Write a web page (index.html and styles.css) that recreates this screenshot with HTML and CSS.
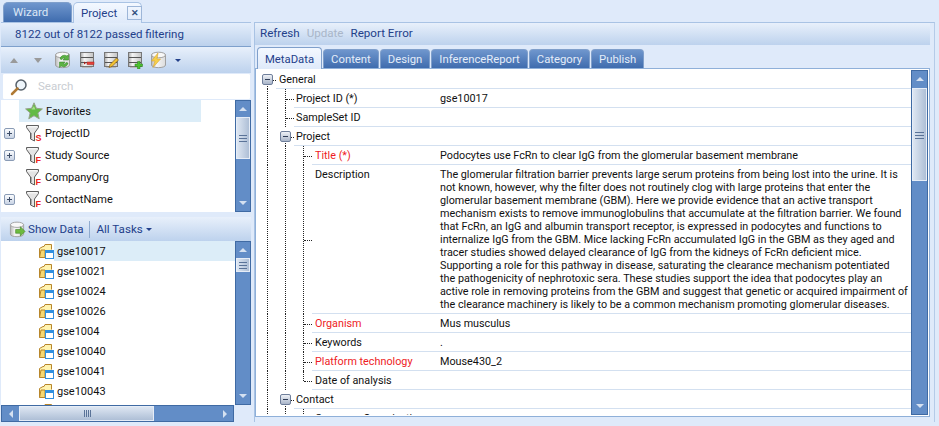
FILE: index.html

```html
<!DOCTYPE html>
<html>
<head>
<meta name="viewport" content="width=device-width, initial-scale=1">
<title>Project</title>
<link rel="stylesheet" href="styles.css">
</head>
<body>

<svg class="defs" width="0" height="0">
  <defs>
    <linearGradient id="disk" x1="0" x2="1" y1="0" y2="0"><stop offset="0" stop-color="#a8a8a8"/><stop offset=".3" stop-color="#f4f4f4"/><stop offset="1" stop-color="#c4c4c4"/></linearGradient>
    <linearGradient id="canfill" x1="0" x2="1" y1="0" y2="0"><stop offset="0" stop-color="#b9b9b9"/><stop offset=".35" stop-color="#f6f6f6"/><stop offset="1" stop-color="#dcdcdc"/></linearGradient>
    <symbol id="stack" viewBox="0 0 18 18">
      <rect x="2.500" y="1.500" width="13" height="14" fill="url(#disk)" stroke="#777"/>
      <path d="M3 6.500h12M3 11.500h12" stroke="#555"/>
      <path d="M4 16.500h10" stroke="#bbb"/>
    </symbol>
    <symbol id="can" viewBox="0 0 18 18">
      <path d="M1.500 4v10c0 3.500 14 3.500 14 0V4z" fill="url(#canfill)" stroke="#a0a0a0"/>
      <ellipse cx="8.500" cy="4" rx="7" ry="2.800" fill="#f8f8f8" stroke="#a0a0a0"/>
    </symbol>
    <symbol id="funnel" viewBox="0 0 16 18">
      <path d="M.5 1.500h12v2L8.500 9v8l-4-2V9L.5 3.500z" fill="#e4e4e4" stroke="#5f5f5f"/>
      <path d="M2 2.800h9" stroke="#fff"/>
      <path d="M5.500 9v5.500" stroke="#a8a8a8"/>
    </symbol>
    <symbol id="folder" viewBox="0 0 16 16">
      <path d="M1.500 14.500V5.500L5 3.500h1l1-2h6.500v5" fill="#fff3b0" stroke="#b8862b"/>
      <path d="M1.500 14.500L3 7h4v7.500z" fill="#f5d772" stroke="#b8862b"/>
      <rect x="7.500" y="7.500" width="8" height="8" fill="#fff" stroke="#2f8fe0"/>
      <rect x="8" y="8" width="7" height="2" fill="#2f8fe0"/>
    </symbol>
  </defs>
</svg>

<div class="tabstrip">
  <div class="doc-tab">Wizard</div>
  <div class="doc-tab active">Project <span class="close">&#10005;</span></div>
</div>

<div class="main">
  <div class="left">
    <div class="status">8122 out of 8122 passed filtering</div>

    <div class="toolbar">
      <span class="tri up"></span>
      <span class="tri down"></span>
      <svg class="tool first" viewBox="0 0 18 18"><use href="#can"/><path d="M6 8a4.500 4.500 0 0 1 7-3l1.500-1.500V9H9l2-2a2.500 2.500 0 0 0-3 1.500zM14 12a4.500 4.500 0 0 1-7 3l-1.500 1.500V11H11l-2 2a2.500 2.500 0 0 0 3-1.500z" fill="#5cb343" stroke="#2f7f25" stroke-width=".5"/></svg>
      <svg class="tool" viewBox="0 0 18 18"><use href="#stack"/><path d="M6 10.500l2 1.500-2 1.500z" fill="#a52019"/><rect x="9" y="11" width="7" height="2.500" fill="#e6413a" stroke="#a52019" stroke-width=".5"/></svg>
      <svg class="tool" viewBox="0 0 18 18"><use href="#stack"/><path d="M7 16.500l1-3 6.500-6.500 2 2-6.500 6.500z" fill="#f2c230" stroke="#6e4a14" stroke-width=".6"/></svg>
      <svg class="tool" viewBox="0 0 18 18"><use href="#stack"/><path d="M11.500 10.500h2.500V13h2.500v2.500H14V18h-2.500v-2.500H9V13h2.500z" fill="#4cc12f" stroke="#2a7d1c" stroke-width=".5"/></svg>
      <svg class="tool" viewBox="0 0 18 18"><use href="#can"/><path d="M8 2L1.500 10h3.500l-2 6.500L10.500 8H7z" fill="#f5cf4a" stroke="#d9a531" stroke-width=".6"/></svg>
      <span class="caret"></span>
    </div>

    <div class="search">
      <svg class="lens" viewBox="0 0 18 18"><circle cx="11" cy="7" r="5" fill="#eef5fb" stroke="#56606a" stroke-width="1.500"/><path d="M7.500 10.500L2 16" stroke="#b07a35" stroke-width="2.500" stroke-linecap="round"/></svg>
      <span class="hint">Search</span>
    </div>

    <div class="pane tree-pane">
      <div class="pane-list">
        <div class="f-row">
          <span class="plus-cell"></span>
          <div class="f-item selected">
            <svg class="ic star" viewBox="0 0 18 18"><path d="M9 .8l2.400 5.500 6 .6-4.500 4 1.300 5.900L9 13.700l-5.200 3.100 1.300-5.900-4.500-4 6-.6z" fill="#63bb45" stroke="#98a38c"/><path d="M9 4l1.300 3.500H6.500z" fill="#a6e08a"/></svg>
            <span>Favorites</span>
          </div>
        </div>
        <div class="f-row">
          <span class="plus-cell"><span class="box plus"></span></span>
          <div class="f-item">
            <svg class="fn" viewBox="0 0 16 18"><use href="#funnel"/><text x="9.500" y="17" class="fl">S</text></svg>
            <span>ProjectID</span>
          </div>
        </div>
        <div class="f-row">
          <span class="plus-cell"><span class="box plus"></span></span>
          <div class="f-item">
            <svg class="fn" viewBox="0 0 16 18"><use href="#funnel"/><text x="9.500" y="17" class="fl">F</text></svg>
            <span>Study Source</span>
          </div>
        </div>
        <div class="f-row">
          <span class="plus-cell"></span>
          <div class="f-item">
            <svg class="fn" viewBox="0 0 16 18"><use href="#funnel"/><text x="9.500" y="17" class="fl">F</text></svg>
            <span>CompanyOrg</span>
          </div>
        </div>
        <div class="f-row">
          <span class="plus-cell"><span class="box plus"></span></span>
          <div class="f-item">
            <svg class="fn" viewBox="0 0 16 18"><use href="#funnel"/><text x="9.500" y="17" class="fl">F</text></svg>
            <span>ContactName</span>
          </div>
        </div>
      </div>
      <div class="vscroll">
        <div class="sb-btn"><span class="arrow a-up"></span></div>
        <div class="sb-thumb tall"></div>
        <div class="sb-fill"></div>
        <div class="sb-btn"><span class="arrow a-down"></span></div>
      </div>
    </div>

    <div class="toolbar tasks">
      <svg class="show-ic" viewBox="0 0 18 18"><use href="#can"/><path d="M7 9h5V6l5 5-5 5v-3H7z" fill="#6dbb3e" stroke="#3c7f1f" stroke-width=".6"/></svg>
      <span class="task-btn">Show Data</span>
      <span class="sep"></span>
      <span class="task-btn">All Tasks</span>
      <span class="caret small"></span>
    </div>

    <div class="pane data-pane">
      <div class="pane-list">
        <div class="d-row"><svg class="ic" viewBox="0 0 16 16"><use href="#folder"/></svg><span class="d-name selected">gse10017</span></div>
        <div class="d-row"><svg class="ic" viewBox="0 0 16 16"><use href="#folder"/></svg><span class="d-name">gse10021</span></div>
        <div class="d-row"><svg class="ic" viewBox="0 0 16 16"><use href="#folder"/></svg><span class="d-name">gse10024</span></div>
        <div class="d-row"><svg class="ic" viewBox="0 0 16 16"><use href="#folder"/></svg><span class="d-name">gse10026</span></div>
        <div class="d-row"><svg class="ic" viewBox="0 0 16 16"><use href="#folder"/></svg><span class="d-name">gse1004</span></div>
        <div class="d-row"><svg class="ic" viewBox="0 0 16 16"><use href="#folder"/></svg><span class="d-name">gse10040</span></div>
        <div class="d-row"><svg class="ic" viewBox="0 0 16 16"><use href="#folder"/></svg><span class="d-name">gse10041</span></div>
        <div class="d-row"><svg class="ic" viewBox="0 0 16 16"><use href="#folder"/></svg><span class="d-name">gse10043</span></div>
        <div class="d-row"><svg class="ic" viewBox="0 0 16 16"><use href="#folder"/></svg></div>
      </div>
      <div class="vscroll">
        <div class="sb-btn"><span class="arrow a-up"></span></div>
        <div class="sb-thumb short"></div>
        <div class="sb-fill"></div>
        <div class="sb-btn"><span class="arrow a-down"></span></div>
      </div>
    </div>

    <div class="hscroll">
      <div class="sb-btn side"><span class="arrow a-left"></span></div>
      <div class="h-thumb"></div>
      <div class="sb-fill"></div>
      <div class="sb-btn side"><span class="arrow a-right"></span></div>
    </div>
  </div>

  <div class="right">
    <div class="actions">
      <span>Refresh</span>
      <span class="off">Update</span>
      <span>Report Error</span>
    </div>

    <div class="tabs">
      <div class="tab on">MetaData</div>
      <div class="tab">Content</div>
      <div class="tab">Design</div>
      <div class="tab">InferenceReport</div>
      <div class="tab">Category</div>
      <div class="tab">Publish</div>
    </div>

    <div class="sheet">
      <div class="grid">
        <div class="row">
          <span class="g x"><i></i></span>
          <div class="cell"><span class="key">General</span></div>
        </div>
        <div class="row">
          <span class="g v"></span><span class="g t"></span>
          <div class="cell"><span class="key k1">Project ID (*)</span><span class="val">gse10017</span></div>
        </div>
        <div class="row">
          <span class="g v"></span><span class="g t"></span>
          <div class="cell"><span class="key k1">SampleSet ID</span></div>
        </div>
        <div class="row">
          <span class="g v"></span><span class="g x mid"><i></i></span>
          <div class="cell"><span class="key k1">Project</span></div>
        </div>
        <div class="row">
          <span class="g v"></span><span class="g v"></span><span class="g t"></span>
          <div class="cell"><span class="key k2 req">Title (*)</span><span class="val">Podocytes use FcRn to clear IgG from the glomerular basement membrane</span></div>
        </div>
        <div class="row tall-row">
          <span class="g v"></span><span class="g v"></span><span class="g t"></span>
          <div class="cell"><span class="key k2">Description</span><span class="val">The glomerular filtration barrier prevents large serum proteins from being lost into the urine. It is<br>not known, however, why the filter does not routinely clog with large proteins that enter the<br>glomerular basement membrane (GBM). Here we provide evidence that an active transport<br>mechanism exists to remove immunoglobulins that accumulate at the filtration barrier. We found<br>that FcRn, an IgG and albumin transport receptor, is expressed in podocytes and functions to<br>internalize IgG from the GBM. Mice lacking FcRn accumulated IgG in the GBM as they aged and<br>tracer studies showed delayed clearance of IgG from the kidneys of FcRn deficient mice.<br>Supporting a role for this pathway in disease, saturating the clearance mechanism potentiated<br>the pathogenicity of nephrotoxic sera. These studies support the idea that podocytes play an<br>active role in removing proteins from the GBM and suggest that genetic or acquired impairment of<br>the clearance machinery is likely to be a common mechanism promoting glomerular diseases.</span></div>
        </div>
        <div class="row">
          <span class="g v"></span><span class="g v"></span><span class="g t"></span>
          <div class="cell"><span class="key k2 req">Organism</span><span class="val">Mus musculus</span></div>
        </div>
        <div class="row">
          <span class="g v"></span><span class="g v"></span><span class="g t"></span>
          <div class="cell"><span class="key k2">Keywords</span><span class="val">.</span></div>
        </div>
        <div class="row">
          <span class="g v"></span><span class="g v"></span><span class="g t"></span>
          <div class="cell"><span class="key k2 req">Platform technology</span><span class="val">Mouse430_2</span></div>
        </div>
        <div class="row">
          <span class="g v"></span><span class="g v"></span><span class="g l"></span>
          <div class="cell"><span class="key k2">Date of analysis</span></div>
        </div>
        <div class="row">
          <span class="g v"></span><span class="g x mid"><i></i></span>
          <div class="cell"><span class="key k1">Contact</span></div>
        </div>
        <div class="row">
          <span class="g v"></span><span class="g v"></span><span class="g t"></span>
          <div class="cell"><span class="key k2">Company Organization</span></div>
        </div>
      </div>
      <div class="vscroll big">
        <div class="sb-btn"><span class="arrow a-up"></span></div>
        <div class="sb-thumb huge"></div>
        <div class="sb-fill"></div>
        <div class="sb-btn"><span class="arrow a-down"></span></div>
      </div>
    </div>
  </div>
</div>

</body>
</html>
```

FILE: styles.css

```css
* {
    box-sizing: border-box;
}

html, body {
    height: 100%;
}

body {
    margin: 0;
    overflow: hidden;
    background-color: #dfeafa;
    font-family: Roboto, Arial, sans-serif;
    font-size: 11px;
    line-height: 13px;
    color: #111;
}

.defs {
    position: absolute;
}

/* document tabs */
.tabstrip {
    display: flex;
    gap: 1px;
    height: 22px;
    padding: 2px 0 0 3px;
}

.doc-tab {
    display: flex;
    align-items: center;
    flex: none;
    width: 69px;
    height: 20px;
    padding: 0 0 0 9px;
    border: 1px solid #7f9fcb;
    border-bottom: none;
    border-radius: 5px 5px 0 0;
    background: linear-gradient(#6f96cd, #3f6cae);
    color: #dbe7f6;
    font-size: 11.500px;
}

.doc-tab.active {
    position: relative;
    z-index: 1;
    height: 21px;
    padding-left: 7px;
    border-color: #a9c3e4;
    background: linear-gradient(#f3f8ff, #dfeafa);
    color: #23408a;
}

.close {
    flex: none;
    width: 15px;
    height: 14px;
    margin-left: 10px;
    border: 1px solid #9db6d8;
    color: #32507f;
    font-size: 9px;
    font-weight: bold;
    line-height: 12px;
    text-align: center;
}

.main {
    display: flex;
    gap: 3px;
    height: 400px;
    padding-left: 1px;
}

/* left column */
.left {
    display: flex;
    flex-direction: column;
    flex: none;
    width: 250px;
    border-top: 1px solid #a9c3e4;
}

.status {
    height: 24px;
    padding: 5px 0 0 14px;
    border-bottom: 1px solid #7ea0cc;
    background: linear-gradient(#e4eefb, #bcd1ec);
    color: #23408a;
    font-size: 11.500px;
}

.toolbar {
    display: flex;
    align-items: center;
    height: 26px;
    background: linear-gradient(#e8f0fb, #bdd2ed);
}

.tri {
    width: 0;
    height: 0;
    margin-left: 9px;
    border-left: 4px solid transparent;
    border-right: 4px solid transparent;
}

.tri.up {
    border-bottom: 5px solid #9a9a9a;
}

.tri.down {
    margin-left: 16px;
    border-top: 5px solid #9a9a9a;
}

.tool {
    width: 18px;
    height: 18px;
    margin-left: 6px;
}

.tool.first {
    margin-left: 12px;
}

.caret {
    width: 0;
    height: 0;
    margin-left: 7px;
    border-left: 3px solid transparent;
    border-right: 3px solid transparent;
    border-top: 3px solid #23408a;
}

.search {
    display: flex;
    align-items: center;
    height: 27px;
    margin-left: 1px;
    border: 1px solid #dfeafa;
    border-radius: 2px;
    background: #fff;
}

.lens {
    width: 18px;
    height: 18px;
    margin-left: 7px;
}

.hint {
    margin-left: 10px;
    color: #c9cdd2;
    font-size: 11.500px;
}

.pane {
    display: flex;
    overflow: hidden;
    background: #fff;
}

.pane-list {
    flex: 1;
    min-width: 0;
    overflow: hidden;
}

.tree-pane {
    height: 112px;
}

.f-row {
    display: flex;
    height: 22px;
}

.plus-cell {
    display: flex;
    align-items: center;
    flex: none;
    width: 18px;
    padding-left: 3px;
}

.box {
    position: relative;
    display: block;
    flex: none;
    width: 11px;
    height: 11px;
    border: 1px solid #8a9bb5;
    border-radius: 2px;
    background: linear-gradient(#fbfcfe, #c8d3e4);
}

.box::before {
    content: "";
    position: absolute;
    top: 4px;
    left: 2px;
    width: 5px;
    height: 1px;
    background: #3d4d68;
}

.box.plus::after {
    content: "";
    position: absolute;
    top: 2px;
    left: 4px;
    width: 1px;
    height: 5px;
    background: #3d4d68;
}

.f-item {
    display: flex;
    align-items: center;
    gap: 3px;
    flex: none;
    width: 182px;
    padding-left: 7px;
}

.selected {
    background: #dcedf8;
}

.ic {
    flex: none;
    width: 16px;
    height: 16px;
}

.star {
    width: 18px;
    height: 18px;
    margin-left: -1px;
}

.fn {
    flex: none;
    width: 16px;
    height: 18px;
}

.fl {
    fill: #ee2222;
    font-family: "Liberation Sans", Arial, sans-serif;
    font-size: 9px;
    font-weight: bold;
}

.tasks {
    height: 24px;
    margin-top: 5px;
    padding-left: 8px;
    color: #23408a;
    font-size: 11.600px;
}

.show-ic {
    width: 17px;
    height: 17px;
}

.task-btn {
    margin-left: 2px;
}

.sep {
    width: 1px;
    height: 17px;
    margin: 0 4px 0 6px;
    background: #8fabcf;
}

.caret.small {
    margin-left: 3px;
}

.data-pane {
    height: 164px;
}

.d-row {
    display: flex;
    align-items: center;
    height: 20px;
    padding-left: 37px;
}

.d-name {
    flex: 1;
    height: 100%;
    padding: 4px 0 0 3px;
}

/* scrollbars */
.vscroll {
    display: flex;
    flex-direction: column;
    flex: none;
    width: 16px;
    border: 1px solid #3f6aa3;
    background: #628dc7;
}

.sb-btn {
    display: flex;
    align-items: center;
    justify-content: center;
    flex: none;
    height: 16px;
}

.sb-fill {
    flex: 1;
}

.sb-thumb, .h-thumb {
    position: relative;
    flex: none;
    background: linear-gradient(90deg, #dde6f2, #aebfd6);
    border: 1px solid #e6edf7;
}

.sb-thumb::after {
    content: "";
    position: absolute;
    top: 50%;
    left: 2px;
    right: 2px;
    height: 7px;
    margin-top: -3px;
    background: repeating-linear-gradient(#5a7398 0 1px, transparent 1px 3px);
}

.tall {
    height: 42px;
}

.short {
    height: 14px;
}

.huge {
    height: 93px;
    margin-top: 1px;
}

.arrow {
    width: 0;
    height: 0;
    border: 4px solid transparent;
}

.a-up {
    margin-bottom: 4px;
    border-bottom-color: #d5e1f1;
}

.a-down {
    margin-top: 4px;
    border-top-color: #d5e1f1;
}

.a-left {
    margin-right: 4px;
    border-right-color: #d5e1f1;
}

.a-right {
    margin-left: 4px;
    border-left-color: #d5e1f1;
}

.hscroll {
    display: flex;
    flex: none;
    width: 233px;
    height: 17px;
    border: 1px solid #3f6aa3;
    background: #628dc7;
}

.sb-btn.side {
    width: 17px;
    height: auto;
}

.h-thumb {
    width: 135px;
    background: linear-gradient(#dde6f2, #aebfd6);
}

.h-thumb::after {
    content: "";
    position: absolute;
    top: 3px;
    bottom: 3px;
    left: 64px;
    width: 7px;
    background: repeating-linear-gradient(90deg, #5a7398 0 1px, transparent 1px 2px);
}

/* right column */
.right {
    display: flex;
    flex-direction: column;
    flex: none;
    width: 681px;
    padding-right: 4px;
    border-left: 1px solid #a9c3e4;
    border-right: 1px solid #b5cbe8;
    border-top: 1px solid #a9c3e4;
}

.actions {
    display: flex;
    gap: 7px;
    flex: none;
    height: 22px;
    padding: 4px 0 0 5px;
    background: linear-gradient(#e8f0fb, #bdd2ed);
    color: #23408a;
    font-size: 11.600px;
}

.off {
    color: #a9b6c9;
}

.tabs {
    display: flex;
    gap: 1px;
    flex: none;
    height: 23px;
    padding: 2px 0 0 2px;
}

.tab {
    height: 19px;
    margin-top: 2px;
    padding: 3px 7px 0;
    border: 1px solid #7f9fcb;
    border-bottom: none;
    border-radius: 4px 4px 0 0;
    background: linear-gradient(#6f96cd, #3f6cae);
    color: #e4edf9;
    font-size: 11.300px;
}

.tab.on {
    position: relative;
    z-index: 1;
    height: 22px;
    margin-top: 0;
    padding-top: 5px;
    background: linear-gradient(#f3f8ff, #dfeafa);
    color: #23408a;
}

.sheet {
    display: flex;
    height: 349px;
    padding: 1px;
    border: 1px solid #8fb0d9;
    background: #fff;
}

.grid {
    flex: 1;
    min-width: 0;
    overflow: hidden;
    padding-left: 1px;
}

.vscroll.big {
    width: 17px;
}

.row {
    display: flex;
    min-height: 19px;
}

.g {
    position: relative;
    flex: none;
    width: 18px;
}

.g.v::before, .g.t::before, .g.l::before {
    content: "";
    position: absolute;
    top: 0;
    bottom: 0;
    left: 9px;
    border-left: 1px dotted #222;
}

.g.l::before {
    bottom: 50%;
}

.g.t::after, .g.l::after, .g.x::after {
    content: "";
    position: absolute;
    top: 50%;
    left: 10px;
    right: 0;
    border-top: 1px dotted #222;
}

.g.x::before {
    content: "";
    position: absolute;
    top: 50%;
    bottom: 0;
    left: 9px;
    border-left: 1px dotted #222;
}

.g.x i {
    position: absolute;
    z-index: 1;
    top: 4px;
    left: 4px;
    width: 11px;
    height: 11px;
    border: 1px solid #6f7f9b;
    border-radius: 2px;
    background: linear-gradient(#eef1f6, #a9b5c9);
}

.g.x i::before {
    content: "";
    position: absolute;
    top: 4px;
    left: 2px;
    width: 5px;
    height: 1px;
    background: #2f3d57;
}

.cell {
    display: flex;
    flex: 1;
    min-width: 0;
    padding-top: 3px;
    border-bottom: 1px solid #d3e0f0;
    white-space: nowrap;
    font-size: 10.800px;
}

.key {
    flex: none;
    padding-left: 3px;
}

.k1 {
    width: 146px;
    padding-left: 2px;
}

.k2 {
    width: 128px;
}

.req {
    color: #ee1c25;
}

.val {
    flex: none;
}

.tall-row .cell {
    padding-bottom: 2px;
}
```
